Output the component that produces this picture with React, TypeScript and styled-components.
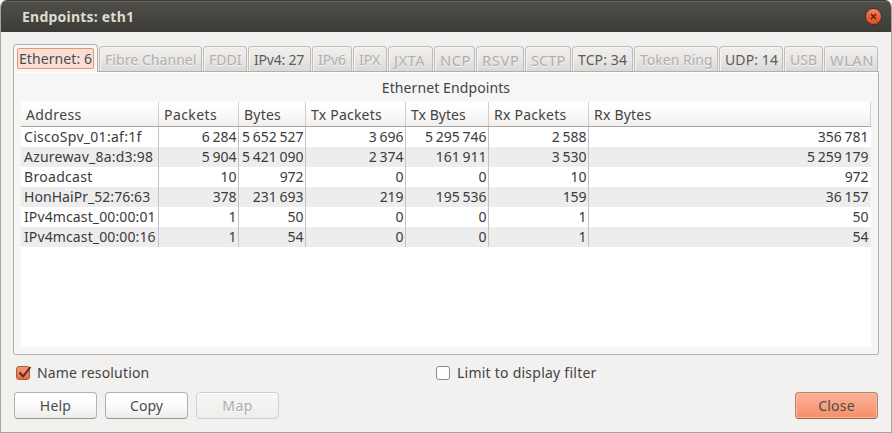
import React from 'react';
import styled, { createGlobalStyle, css } from 'styled-components';

const GlobalStyle = createGlobalStyle`
  *, *::before, *::after { box-sizing: border-box; }
  html, body { margin: 0; background: #fff; }
  body { overflow: hidden; }
`;

const Window = styled.main`
  width: 892px;
  height: 433px;
  display: flex;
  flex-direction: column;
  background: #f2f1f0;
  border: solid #a5a19c;
  border-width: 0 1px 1px;
  border-radius: 7px 7px 0 0;
  overflow: hidden;
  font: 14px/20px "Noto Sans", sans-serif;
  color: #434343;
`;

const TitleBar = styled.header`
  flex: none;
  height: 32px;
  display: flex;
  align-items: center;
  justify-content: space-between;
  padding: 0 9px 0 21px;
  background: linear-gradient(#504f49, #3c3b37);
  border-top: 1px solid #3c3b37;
  box-shadow: inset 0 1px #65645c;
`;

const Spaced = styled.span<{ $ls?: number }>`
  letter-spacing: ${({ $ls = 0 }) => $ls}px;
  white-space: pre;
`;

const Title = styled.h1`
  margin: 0;
  font-size: 14px;
  font-weight: 700;
  line-height: 20px;
  letter-spacing: 0.22px;
  color: #dfdbd2;
`;

const CloseIcon = styled.button`
  width: 17px;
  height: 17px;
  padding: 0;
  border: 1px solid #33322e;
  border-radius: 50%;
  background: linear-gradient(#f58a68, #ee6236 45%, #e3501f);
  display: grid;
  place-items: center;
`;

const Body = styled.div`
  flex: 1;
  display: flex;
  flex-direction: column;
  padding: 12px 12px 0;
`;

const TabBar = styled.nav`
  height: 27px;
  flex: none;
  display: flex;
  align-items: flex-end;
`;

const Tab = styled.button<{ $w: number; $disabled?: boolean }>`
  flex: none;
  width: ${({ $w }) => $w - 1}px;
  height: 25px;
  margin-right: 1px;
  padding: 2px 0 0 5px;
  text-align: left;
  font: inherit;
  line-height: 20px;
  white-space: nowrap;
  border: 1px solid #c0bcb8;
  border-bottom: 0;
  border-radius: 4px 4px 0 0;
  background: linear-gradient(#f1f0ef, #e9e7e5 50%, #dbd8d5);
  box-shadow: inset 1px 1px #f7f6f5;
  color: ${({ $disabled }) => ($disabled ? '#b1aeab' : '#5c5b59')};
  text-shadow: ${({ $disabled }) => ($disabled ? '0 1px #f6f5f4' : 'none')};
`;

const ActiveTab = styled.button`
  flex: none;
  display: flex;
  align-items: flex-start;
  width: 85px;
  height: 28px;
  margin: 0 1px -1px 0;
  padding: 3px 3px 0;
  font: inherit;
  border: 1px solid #b4afaa;
  border-bottom: 0;
  border-radius: 4px 4px 0 0;
  background: #f7f7f7;
  color: #4c4c4c;
  z-index: 1;
`;

const FocusBox = styled.span`
  display: block;
  height: 21px;
  width: 77px;
  padding: 0 0 0 1px;
  line-height: 20px;
  text-align: left;
  border: 1px solid #f1936d;
  border-radius: 2px;
  background: #f7dfd5;
  white-space: nowrap;
`;

const Panel = styled.section`
  flex: none;
  height: 284px;
  padding: 6px 7px 7px;
  display: flex;
  flex-direction: column;
  background: #f6f6f6;
  border: 1px solid #b4afaa;
  border-radius: 0 0 3px 3px;
  box-shadow: inset 0 1px #fff;
`;

const Caption = styled.h2`
  margin: 0 0 4px;
  height: 20px;
  font: inherit;
  text-align: center;
`;

const COLUMNS = '138px 80px 67px 100px 83px 100px 282px';

const Grid = styled.div`
  flex: 1;
  background: #fff;
`;

const HeadRow = styled.div`
  display: grid;
  grid-template-columns: ${COLUMNS};
  height: 25px;
  border-bottom: 1px solid #a9a5a1;
  background: linear-gradient(#fff, #fbfafa 50%, #f0efed);
`;

const HeadCell = styled.div`
  padding: 3px 0 0 5px;
  border-right: 1px solid #d2cfcc;
  white-space: nowrap;
`;

const Row = styled.div`
  display: grid;
  grid-template-columns: ${COLUMNS};
  height: 20px;
  &:nth-child(odd) { background: #ededed; }
`;

const Cell = styled.div<{ $text?: boolean }>`
  border-right: 1px solid #c4c4c4;
  white-space: nowrap;
  padding: 0 1.5px 0 3px;
  color: #3b3b3b;
  ${({ $text }) => !$text && css`
    padding-left: 0;
    text-align: right;
    letter-spacing: -0.05px;
    word-spacing: -0.7px;
  `}
  &:last-child { border-right-color: transparent; }
`;

const Options = styled.div`
  display: grid;
  grid-template-columns: 420px 1fr;
  padding: 8px 0 0 3px;
  height: 37px;
`;

const Option = styled.label`
  display: flex;
  align-items: flex-start;
  gap: 7px;
`;

const Box = styled.span<{ $on?: boolean }>`
  width: 14px;
  height: 14px;
  margin-top: 3px;
  border: 1px solid ${({ $on }) => ($on ? '#a9593d' : '#8f8b88')};
  border-radius: 3px;
  background: ${({ $on }) => ($on ? 'linear-gradient(#f69a78, #ea6a41)' : '#fff')};
  svg { display: block; margin: -2px 0 0 -1px; overflow: visible; }
`;

const Actions = styled.footer`
  display: flex;
  gap: 8px;
  padding: 0 1px;
`;

const Button = styled.button<{ $kind?: 'primary' | 'disabled' }>`
  width: 83px;
  height: 27px;
  padding: 1px 0 0;
  font: inherit;
  color: #4c4c4c;
  border: 1px solid #b5b1ad;
  border-bottom-color: #99958f;
  border-radius: 4px;
  background: linear-gradient(#fff, #fcfcfc 50%, #edecea);
  box-shadow: inset 0 1px #fff;
  ${({ $kind }) => $kind === 'disabled' && css`
    color: #acaaa8;
    border-color: #d2cfcc;
    background: linear-gradient(#f7f6f6, #efeeed);
    text-shadow: 0 1px #fff;
  `}
  ${({ $kind }) => $kind === 'primary' && css`
    margin-left: auto;
    border-color: #b38472;
    border-bottom-color: #94634f;
    background: linear-gradient(#fbb196, #f9a080 50%, #f58f69);
    box-shadow: inset 0 0 0 1px #fcb89f;
  `}
`;

const Wide = styled(Spaced)`
  font-size: 14.7px;
`;

type TabInfo = [label: string, width: number, spacing: number, kind?: 'enabled' | 'wide'];

const tabs: TabInfo[] = [
  ['Fibre Channel', 104, 0.06],
  ['FDDI', 45, 0],
  ['IPv4: 27', 64, -0.2, 'enabled'],
  ['IPv6', 41, -0.1],
  ['IPX', 35, 0],
  ['JXTA', 46, 0.5, 'wide'],
  ['NCP', 42, 0.5, 'wide'],
  ['RSVP', 49, 0.7, 'wide'],
  ['SCTP', 47, 0, 'wide'],
  ['TCP: 34', 62, 0.13, 'enabled'],
  ['Token Ring', 85, 0],
  ['UDP: 14', 65, 0.1, 'enabled'],
  ['USB', 40, 0],
  ['WLAN', 55, 0.5, 'wide'],
];

const heads: [string, number][] = [
  ['Address', 0.37],
  ['Packets', 0.42],
  ['Bytes', 0.2],
  ['Tx Packets', 0.22],
  ['Tx Bytes', 0.04],
  ['Rx Packets', 0.25],
  ['Rx Bytes', 0.22],
];

const rows: [string, number, ...string[]][] = [
  ['CiscoSpv_01:af:1f', 0.29, '6 284', '5 652 527', '3 696', '5 295 746', '2 588', '356 781'],
  ['Azurewav_8a:d3:98', 0.22, '5 904', '5 421 090', '2 374', '161 911', '3 530', '5 259 179'],
  ['Broadcast', 0.3, '10', '972', '0', '0', '10', '972'],
  ['HonHaiPr_52:76:63', 0.05, '378', '231 693', '219', '195 536', '159', '36 157'],
  ['IPv4mcast_00:00:01', 0.12, '1', '50', '0', '0', '1', '50'],
  ['IPv4mcast_00:00:16', 0.12, '1', '54', '0', '0', '1', '54'],
];

export default function App() {
  return (
    <>
      <GlobalStyle />
      <Window>
        <TitleBar>
          <Title>Endpoints: eth1</Title>
          <CloseIcon aria-label="Close window">
            <svg width="7" height="7" viewBox="0 0 7 7" stroke="#4a2012" strokeWidth="1.3">
              <path d="M1 1l5 5M6 1L1 6" />
            </svg>
          </CloseIcon>
        </TitleBar>
        <Body>
          <TabBar>
            <ActiveTab>
              <FocusBox><Spaced $ls={0.08}>Ethernet: 6</Spaced></FocusBox>
            </ActiveTab>
            {tabs.map(([label, w, ls, kind]) => {
              const Label = kind === 'wide' ? Wide : Spaced;
              return (
                <Tab key={label} $w={w} $disabled={kind !== 'enabled'}>
                  <Label $ls={ls}>{label}</Label>
                </Tab>
              );
            })}
          </TabBar>
          <Panel>
            <Caption><Spaced $ls={0.1}>Ethernet Endpoints</Spaced></Caption>
            <Grid>
              <HeadRow>
                {heads.map(([label, ls]) => (
                  <HeadCell key={label}><Spaced $ls={ls}>{label}</Spaced></HeadCell>
                ))}
              </HeadRow>
              {rows.map(([address, ls, ...values]) => (
                <Row key={address}>
                  <Cell $text><Spaced $ls={ls}>{address}</Spaced></Cell>
                  {values.map((value, i) => <Cell key={i}>{value}</Cell>)}
                </Row>
              ))}
            </Grid>
          </Panel>
          <Options>
            <Option>
              <Box $on>
                <svg width="15" height="14" viewBox="0 0 15 14" fill="none" stroke="#5a2c1e" strokeWidth="2">
                  <path d="M3.5 7.5l3.5 4L14.5 2" />
                </svg>
              </Box>
              <Spaced $ls={0.18}>Name resolution</Spaced>
            </Option>
            <Option>
              <Box />
              <Spaced $ls={0.24}>Limit to display filter</Spaced>
            </Option>
          </Options>
          <Actions>
            <Button><Spaced $ls={0.2}>Help</Spaced></Button>
            <Button><Spaced>Copy</Spaced></Button>
            <Button $kind="disabled" disabled><Spaced $ls={0.4}>Map</Spaced></Button>
            <Button $kind="primary"><Spaced $ls={0.2}>Close</Spaced></Button>
          </Actions>
        </Body>
      </Window>
    </>
  );
}
